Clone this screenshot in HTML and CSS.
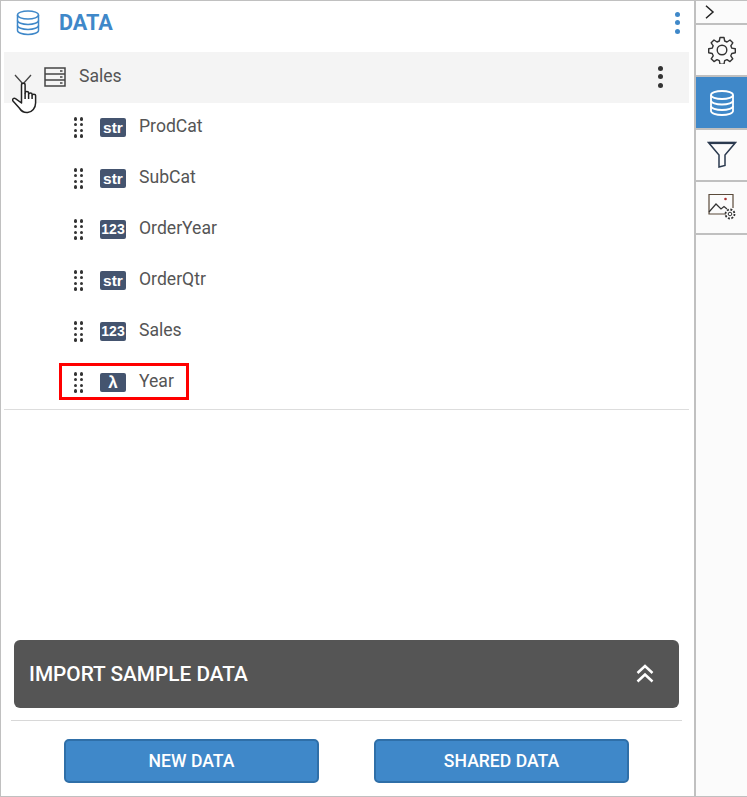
FILE: index.html
```html
<!DOCTYPE html>
<html lang="en">
<head>
    <meta charset="UTF-8">
    <title>Data panel</title>
    <link rel="stylesheet" href="styles.css">
</head>
<body>
<div class="designer">
    <!-- left panel -->
    <div class="panel">
        <div class="panel-head">
            <svg class="db-icon" width="24" height="26" viewBox="0 0 24 26" fill="none" stroke="#3f88c9" stroke-width="1.500">
                <ellipse cx="12" cy="5" rx="10.500" ry="4"/>
                <path d="M1.500 5v15.500c0 2.200 4.700 4 10.500 4s10.500-1.800 10.500-4V5"/>
                <path d="M1.500 10.500c0 2.200 4.700 4 10.500 4s10.500-1.800 10.500-4"/>
                <path d="M1.500 15.500c0 2.200 4.700 4 10.500 4s10.500-1.800 10.500-4"/>
            </svg>
            <span class="panel-title">DATA</span>
            <span class="dots dots-blue"><i></i><i></i><i></i></span>
        </div>

        <div class="tree">
            <div class="source-row">
                <svg class="chevron" width="18" height="11" viewBox="0 0 18 11" fill="none" stroke="#444" stroke-width="1.300">
                    <path d="M1 1l8 9 8-9"/>
                </svg>
                <svg class="table-icon" width="22" height="20" viewBox="0 0 22 20" fill="none" stroke="#444" stroke-width="1.500">
                    <rect x="1" y="1" width="20" height="18"/>
                    <path d="M1 7h20M1 13h20"/>
                    <path d="M16 4h2.500M16 10h2.500M16 16h2.500"/>
                </svg>
                <span class="source-name">Sales</span>
                <span class="dots"><i></i><i></i><i></i></span>
            </div>

            <div class="field-row">
                <span class="grip"><i></i><i></i><i></i><i></i><i></i><i></i><i></i><i></i></span>
                <span class="badge">str</span>
                <span class="field-name">ProdCat</span>
            </div>
            <div class="field-row">
                <span class="grip"><i></i><i></i><i></i><i></i><i></i><i></i><i></i><i></i></span>
                <span class="badge">str</span>
                <span class="field-name">SubCat</span>
            </div>
            <div class="field-row">
                <span class="grip"><i></i><i></i><i></i><i></i><i></i><i></i><i></i><i></i></span>
                <span class="badge badge-num">123</span>
                <span class="field-name">OrderYear</span>
            </div>
            <div class="field-row">
                <span class="grip"><i></i><i></i><i></i><i></i><i></i><i></i><i></i><i></i></span>
                <span class="badge">str</span>
                <span class="field-name">OrderQtr</span>
            </div>
            <div class="field-row">
                <span class="grip"><i></i><i></i><i></i><i></i><i></i><i></i><i></i><i></i></span>
                <span class="badge badge-num">123</span>
                <span class="field-name">Sales</span>
            </div>
            <div class="field-row">
                <span class="grip"><i></i><i></i><i></i><i></i><i></i><i></i><i></i><i></i></span>
                <span class="badge badge-lambda">λ</span>
                <span class="field-name">Year</span>
                <span class="highlight"></span>
            </div>

            <!-- hand pointer over the chevron -->
            <svg class="hand" width="26" height="33" viewBox="0 0 26 33" fill="#fff" stroke="#222" stroke-width="1.500" stroke-linejoin="round">
                <path d="M9.500 3c0-2.200 3.600-2.200 3.600 0V11c0-2 3.500-2 3.500 0v1.500c0-2 3.500-2 3.500 0v1c0-1.800 3.500-1.800 3.500 0v7.500c0 5-3.500 9-8 9.500-4 .3-6.800-2-8.300-4.500L1 19c-1.300-1.800.8-3.600 2.500-2.300L9.500 21z"/>
                <path d="M13.100 11v6M16.600 12.500v4.500M20.100 13.500v3.500" fill="none"/>
            </svg>
        </div>

        <div class="sample-bar">
            <span>IMPORT SAMPLE DATA</span>
            <svg width="20" height="20" viewBox="0 0 20 20" fill="none" stroke="#fff" stroke-width="2.500">
                <path d="M2.500 9l7.500-7 7.500 7M2.500 17.500l7.500-7 7.500 7"/>
            </svg>
        </div>

        <div class="actions">
            <button class="action-btn" type="button">NEW DATA</button>
            <button class="action-btn" type="button">SHARED DATA</button>
        </div>
    </div>

    <!-- right icon strip -->
    <div class="strip">
        <div class="strip-toggle">
            <svg width="10" height="14" viewBox="0 0 10 14" fill="none" stroke="#222" stroke-width="1.500">
                <path d="M1 .8l7 6.200-7 6.200"/>
            </svg>
        </div>
        <div class="strip-item">
            <svg width="28" height="28" viewBox="0 0 28 28" fill="none" stroke="#333" stroke-width="1.400" stroke-linejoin="round">
                <circle cx="14" cy="14" r="4.800"/>
                <path d="M12 1.500h4l.7 3.500 2.300 1 3-2 2.800 2.800-2 3 1 2.300 3.500.7v4l-3.500.7-1 2.300 2 3-2.800 2.800-3-2-2.300 1-.7 3.500h-4l-.7-3.500-2.300-1-3 2-2.800-2.800 2-3-1-2.300-3.500-.7v-4l3.500-.7 1-2.300-2-3 2.800-2.800 3 2 2.300-1z"/>
            </svg>
        </div>
        <div class="strip-item strip-active">
            <svg width="26" height="28" viewBox="0 0 26 28" fill="none" stroke="#fff" stroke-width="1.800">
                <ellipse cx="13" cy="6" rx="11" ry="4"/>
                <path d="M2 6v16c0 2.200 5 4 11 4s11-1.800 11-4V6"/>
                <path d="M2 11.500c0 2.200 5 4 11 4s11-1.800 11-4"/>
                <path d="M2 17c0 2.200 5 4 11 4s11-1.800 11-4"/>
            </svg>
        </div>
        <div class="strip-item">
            <svg width="30" height="28" viewBox="0 0 30 28" fill="none" stroke="#2b3a4f" stroke-width="1.500" stroke-linejoin="miter">
                <path d="M1.500 1.500h27L18 14v10.500L12 26V14z"/>
                <path d="M2 2h26" stroke-width="2.200"/>
            </svg>
        </div>
        <div class="strip-item">
            <svg width="30" height="28" viewBox="0 0 30 28" fill="none" stroke="#333" stroke-width="1.200">
                <path d="M19 21H2V1.500h24V15" stroke="#5a4a3a"/>
                <path d="M2 19l7-8 5 5 3-2.500 3 2.500"/>
                <circle cx="18.500" cy="6" r="1.300" fill="#a33" stroke="none"/>
                <circle cx="23" cy="21" r="1.800" stroke-width="1"/>
                <circle cx="23" cy="21" r="4.500" stroke-width="1.800" stroke-dasharray="2 1.500"/>
            </svg>
        </div>
    </div>
</div>
</body>
</html>
```

FILE: styles.css
```css
*{
    box-sizing: border-box;
}
html, body{
    margin: 0;
    padding: 0;
}
body{
    font-family: Roboto, "Liberation Sans", sans-serif;
    background-color: white;
}
.designer{
    display: flex;
    width: 747px;
    height: 797px;
    border: 1px solid #c0c0c0;
    border-right: 0;
}
.panel{
    position: relative;
    display: flex;
    flex-direction: column;
    width: 693px;
    padding: 0 5px 0 3px;
}
.panel-head{
    display: flex;
    align-items: center;
    height: 51px;
    padding: 0 8px 8px 12px;
}
.db-icon{
    margin-right: 19px;
}
.panel-title{
    flex: 1;
    font-size: 21.6px;
    font-weight: 700;
    color: #3f88c9;
}
.dots{
    display: flex;
    flex-direction: column;
    gap: 3.5px;
    width: 6px;
}
.dots i{
    width: 5px;
    height: 5px;
    border-radius: 50%;
    background-color: #333;
}
.dots-blue i{
    background-color: #3f88c9;
}
.tree{
    position: relative;
    height: 358px;
    border-bottom: 1px solid #ddd;
}
.source-row{
    display: flex;
    align-items: center;
    height: 51px;
    padding: 0 25px 2px 10px;
    background-color: #f4f4f4;
}
.chevron{
    margin: 6px 12px 0 0;
}
.table-icon{
    margin-right: 13px;
}
.source-name{
    flex: 1;
    margin-bottom: 2px;
    font-size: 17.6px;
    color: #555;
}
.field-row{
    position: relative;
    display: flex;
    align-items: center;
    height: 51px;
    padding: 0 0 2px 69px;
}
.grip{
    display: grid;
    grid-template-columns: 3.4px 3.4px;
    gap: 2.3px 2.4px;
    width: 27px;
    padding-left: 1px;
}
.grip i{
    width: 3.4px;
    height: 3.4px;
    border-radius: 50%;
    background-color: #333;
}
.badge{
    width: 26px;
    height: 19px;
    margin-right: 13px;
    border-radius: 2px;
    background-color: #44546f;
    color: white;
    font-family: "Liberation Sans", sans-serif;
    font-size: 15.5px;
    font-weight: 700;
    line-height: 19px;
    text-align: center;
}
.badge-num{
    font-size: 14px;
}
.badge-lambda{
    font-size: 17px;
}
.field-name{
    margin-bottom: 3px;
    font-size: 17.6px;
    color: #555;
}
.highlight{
    position: absolute;
    left: 55px;
    top: 5px;
    width: 130px;
    height: 37px;
    border: 3px solid #f00;
}
.hand{
    position: absolute;
    left: 8px;
    top: 30px;
}
.sample-bar{
    display: flex;
    align-items: center;
    justify-content: space-between;
    height: 68px;
    margin: 230px 10px 12px 10px;
    padding: 0 24px 0 15px;
    border-radius: 6px;
    background-color: #555;
    color: white;
    font-size: 20.8px;
    font-weight: 500;
}
.actions{
    display: flex;
    gap: 55px;
    margin: 0 7px 0 7px;
    padding: 18px 0 0 53px;
    border-top: 1px solid #d8d8d8;
}
.action-btn{
    width: 255px;
    height: 44px;
    border: 2px solid #2f6fa8;
    border-radius: 5px;
    background-color: #3f88c9;
    color: white;
    font-family: inherit;
    font-size: 17.6px;
    font-weight: 500;
}
.strip{
    flex: 1;
    border-left: 2px solid #c0c0c0;
    background-color: #fbfbfb;
}
.strip-toggle{
    display: flex;
    align-items: center;
    height: 24px;
    padding-left: 9px;
    border-bottom: 2px solid #c0c0c0;
}
.strip-item{
    display: flex;
    align-items: center;
    justify-content: center;
    height: 52.4px;
    border-bottom: 2px solid #c0c0c0;
}
.strip-active{
    background-color: #3f88c9;
}
```
